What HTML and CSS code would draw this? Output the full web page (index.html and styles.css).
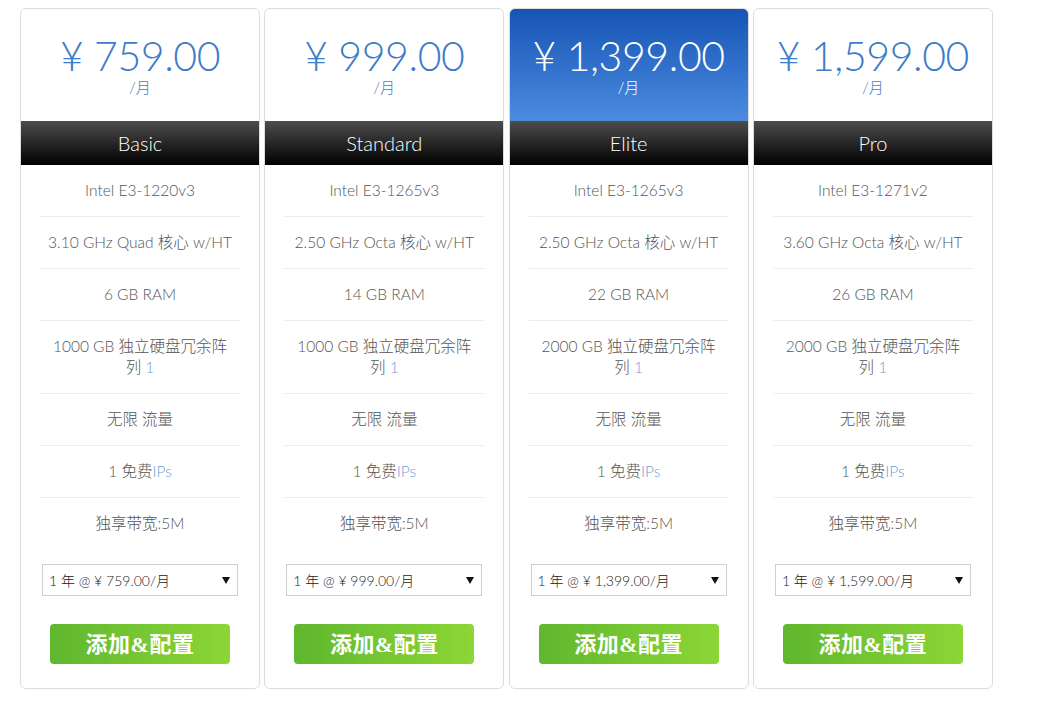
FILE: index.html
```html
<!DOCTYPE html>
<html lang="zh">
<head>
<meta charset="utf-8">
<title>Pricing</title>
<link rel="stylesheet" href="styles.css">
</head>
<body>
<div class="plans">
  <div class="card">
    <div class="price-box">
      <div class="price">¥ 759.00</div>
      <div class="per">/月</div>
    </div>
    <div class="plan-name">Basic</div>
    <ul class="features">
      <li>Intel E3-1220v3</li>
      <li>3.10 GHz Quad 核心 w/HT</li>
      <li>6 GB RAM</li>
      <li>1000 GB 独立硬盘冗余阵列 <span class="hl">1</span></li>
      <li>无限 流量</li>
      <li>1 免费<span class="hl">IPs</span></li>
      <li>独享带宽:5M</li>
    </ul>
    <div class="cycle"><select class="cycle-select"><option>1 年 @ ¥ 759.00/月</option></select></div>
    <div class="action"><button class="btn">添加&amp;配置</button></div>
  </div>
  <div class="card">
    <div class="price-box">
      <div class="price">¥ 999.00</div>
      <div class="per">/月</div>
    </div>
    <div class="plan-name">Standard</div>
    <ul class="features">
      <li>Intel E3-1265v3</li>
      <li>2.50 GHz Octa 核心 w/HT</li>
      <li>14 GB RAM</li>
      <li>1000 GB 独立硬盘冗余阵列 <span class="hl">1</span></li>
      <li>无限 流量</li>
      <li>1 免费<span class="hl">IPs</span></li>
      <li>独享带宽:5M</li>
    </ul>
    <div class="cycle"><select class="cycle-select"><option>1 年 @ ¥ 999.00/月</option></select></div>
    <div class="action"><button class="btn">添加&amp;配置</button></div>
  </div>
  <div class="card featured">
    <div class="price-box">
      <div class="price">¥ 1,399.00</div>
      <div class="per">/月</div>
    </div>
    <div class="plan-name">Elite</div>
    <ul class="features">
      <li>Intel E3-1265v3</li>
      <li>2.50 GHz Octa 核心 w/HT</li>
      <li>22 GB RAM</li>
      <li>2000 GB 独立硬盘冗余阵列 <span class="hl">1</span></li>
      <li>无限 流量</li>
      <li>1 免费<span class="hl">IPs</span></li>
      <li>独享带宽:5M</li>
    </ul>
    <div class="cycle"><select class="cycle-select"><option>1 年 @ ¥ 1,399.00/月</option></select></div>
    <div class="action"><button class="btn">添加&amp;配置</button></div>
  </div>
  <div class="card">
    <div class="price-box">
      <div class="price">¥ 1,599.00</div>
      <div class="per">/月</div>
    </div>
    <div class="plan-name">Pro</div>
    <ul class="features">
      <li>Intel E3-1271v2</li>
      <li>3.60 GHz Octa 核心 w/HT</li>
      <li>26 GB RAM</li>
      <li>2000 GB 独立硬盘冗余阵列 <span class="hl">1</span></li>
      <li>无限 流量</li>
      <li>1 免费<span class="hl">IPs</span></li>
      <li>独享带宽:5M</li>
    </ul>
    <div class="cycle"><select class="cycle-select"><option>1 年 @ ¥ 1,599.00/月</option></select></div>
    <div class="action"><button class="btn">添加&amp;配置</button></div>
  </div>
</div>
</body>
</html>
```
FILE: styles.css
```css
* { box-sizing: border-box; }
html, body { margin: 0; padding: 0; background: #fff; }
body {
  font-family: "Lato Light", Lato, "Noto Sans CJK SC", sans-serif;
  font-weight: 300;
  color: #555;
}
.plans {
  display: grid;
  grid-template-columns: repeat(4, 240px);
  column-gap: 4.3px;
  padding: 8px 0 0 20px;
}
.card {
  border: 1px solid #dcdcdc;
  border-radius: 6px;
  overflow: hidden;
  background: #fff;
  display: flex;
  flex-direction: column;
  padding-bottom: 24px;
}
.price-box {
  height: 112px;
  text-align: center;
  padding-top: 26px;
  color: #3d7cc9;
}
.price {
  font-size: 41px;
  line-height: 42px;
  font-weight: 300;
  letter-spacing: -0.4px;
}
.per {
  font-size: 15px;
  line-height: 18px;
  margin-top: 1px;
}
.featured .price-box {
  background: linear-gradient(to bottom, #1655b4 0%, #4b8be0 100%);
  color: #fff;
}
.plan-name {
  height: 44px;
  line-height: 44px;
  text-align: center;
  color: #fff;
  font-size: 20px;
  font-weight: 300;
  background: linear-gradient(to bottom, #4d4d4d 0%, #000 100%);
}
.features {
  list-style: none;
  margin: 0;
  padding: 0 19px;
}
.features li {
  min-height: 52px;
  padding: 15px 6px;
  text-align: center;
  font-size: 15.5px;
  line-height: 21px;
  border-bottom: 1px solid #ececec;
  color: #555;
}
.features li:last-child { border-bottom: 0; }
.hl { color: #6c9fd4; }
.cycle {
  margin-top: 14px;
  padding: 0 21px;
  position: relative;
}
.cycle::after {
  content: "";
  position: absolute;
  right: 29px;
  top: 13px;
  border-left: 4px solid transparent;
  border-right: 4px solid transparent;
  border-top: 7px solid #111;
  pointer-events: none;
}
.cycle-select {
  -webkit-appearance: none;
  appearance: none;
  width: 100%;
  height: 32px;
  border: 1px solid #cfcfcf;
  border-radius: 0;
  background: #fff;
  padding: 0 6px;
  font-family: "Lato Light", Lato, "Noto Sans CJK SC", sans-serif;
  font-weight: 300;
  font-size: 14px;
  color: #222;
}
.action {
  margin-top: 28px;
  text-align: center;
}
.btn {
  width: 180px;
  height: 40px;
  border: 0;
  border-radius: 4px;
  padding: 0 0 4px;
  background: linear-gradient(to right, #5fb72e 0%, #8cd636 100%);
  color: #fff;
  font-family: "Liberation Serif", "Noto Sans CJK SC", serif;
  font-weight: 700;
  font-size: 22px;
  letter-spacing: 0.5px;
  cursor: pointer;
}
```
